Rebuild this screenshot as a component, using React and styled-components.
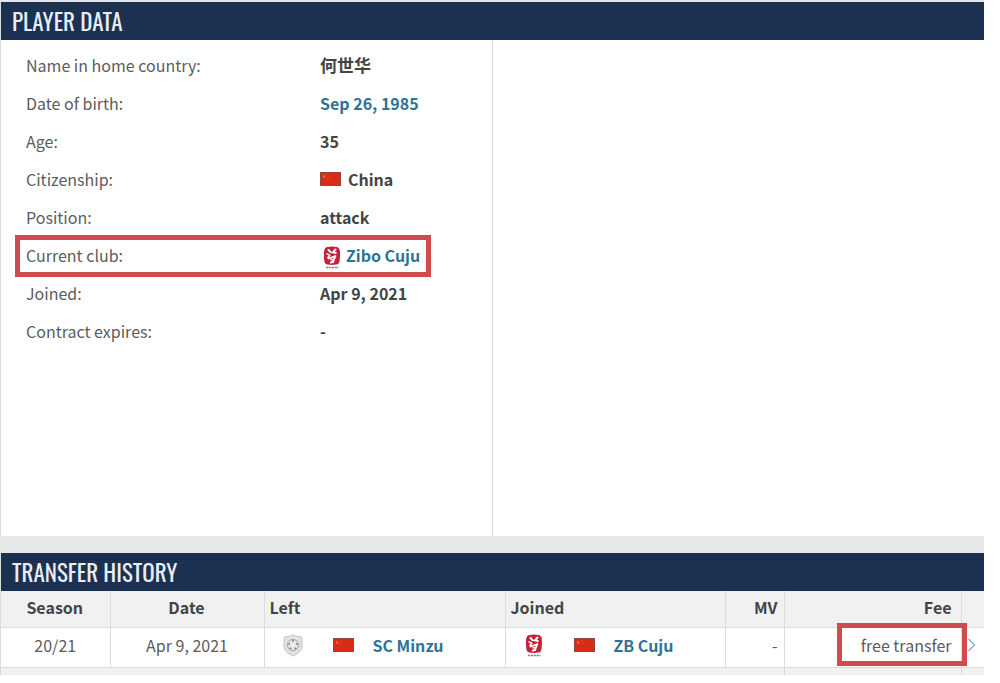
import React from "react";
import styled, { createGlobalStyle, css } from "styled-components";

const colors = {
  navy: "#1c3151",
  link: "#2f7396",
  text: "#444446",
  muted: "#5c5c5e",
  line: "#dcdcde",
  grey: "#f1f1f2",
  mark: "#d14a4e",
};

const GlobalStyle = createGlobalStyle`
  *, *::after {
    box-sizing: border-box;
  }
  body {
    margin: 0;
    background: #fff;
    color: ${colors.text};
    font-family: "Noto Sans CJK SC", "Noto Sans", sans-serif;
    font-size: 16px;
    line-height: 24px;
  }
`;

const Page = styled.main`
  margin-right: 16px;
  padding-top: 2px;
  background: #e6e7e8;
`;

const Box = styled.section`
  margin-bottom: ${props => (props.$last ? "0" : "17px")};
  border-left: 1px solid ${colors.line};
  background: #fff;
`;

const Title = styled.h2`
  height: 38px;
  margin: 0;
  padding: 0 11px;
  background: ${colors.navy};
  color: #e9eef4;
  font-family: Oswald, "Liberation Sans Narrow", sans-serif;
  font-size: 23px;
  font-weight: 450;
  line-height: 38px;
`;

const Columns = styled.div`
  display: grid;
  grid-template-columns: 1fr 1fr;
  min-height: 496px;
`;

const DataList = styled.dl`
  margin: 0;
  padding: 6px 0 0 14px;
  border-right: 1px solid ${colors.line};
`;

const marked = css`
  position: relative;
  &::after {
    content: "";
    position: absolute;
    border: 5px solid ${colors.mark};
    pointer-events: none;
    ${props => props.$mark}
  }
`;

const DataRow = styled.div`
  display: grid;
  grid-template-columns: 294px 1fr;
  align-items: center;
  width: 416px;
  height: 38px;
  padding-left: 11px;
  ${props => props.$mark && marked}
`;

const Label = styled.dt`
  color: ${colors.muted};
`;

const Value = styled.dd`
  display: flex;
  align-items: center;
  gap: ${props => (props.$badge ? "5px" : "7px")};
  margin: 0;
  padding-left: ${props => (props.$badge ? "3px" : "0")};
  font-size: ${props => (props.$native ? "17px" : "16px")};
  font-weight: 700;
  svg {
    margin-top: ${props => (props.$badge ? "5px" : "0")};
  }
`;

const Anchor = styled.a`
  color: ${colors.link};
  font-weight: 700;
  text-decoration: none;
`;

const Table = styled.table`
  width: 100%;
  border-collapse: collapse;
  table-layout: fixed;
`;

const Col = styled.col`
  width: ${props => props.$width || "auto"};
`;

const cell = css`
  padding: 0 ${props => (props.$wide ? "9px" : "6px")} 4px;
  border-right: 1px solid ${colors.line};
  border-bottom: 1px solid ${colors.line};
  text-align: ${props => props.$align || "left"};
  &:last-child {
    border-right: 0;
  }
`;

const Th = styled.th`
  ${cell}
  height: 36px;
  padding-left: 5px;
  background: ${colors.grey};
`;

const Td = styled.td`
  ${cell}
  height: 40px;
  padding-left: 6px;
  color: ${colors.muted};
  ${props => props.$mark && marked}
`;

const FootCell = styled.td`
  height: 8px;
  padding: 0;
  background: ${colors.grey};
  border-right: ${props => (props.$last ? "0" : "1px solid " + colors.line)};
`;

const Club = styled.div`
  display: grid;
  grid-template-columns: 44px 22px 1fr;
  align-items: center;
  justify-items: center;
  column-gap: 18px;
  a {
    justify-self: start;
  }
`;

const More = styled.a`
  display: flex;
  margin: 0 -4px;
  padding-left: 3px;
`;

function Flag() {
  return (
    <svg width="21" height="14" viewBox="0 0 21 14" role="img" aria-label="China">
      <rect x="0.5" y="0.5" width="20" height="13" fill="#d92b18" stroke="#8d4a3c" />
      <path d="M4 2.4l.6 1.3 1.4.1-1.1.9.4 1.4L4 5.4l-1.3.7.4-1.4L2 3.8l1.4-.1z" fill="#ea6a35" />
      <path d="M7 2h1v1H7zM8 4h1v1H8zM7 6h1v1H7z" fill="#e2502a" />
    </svg>
  );
}

function CujuBadge() {
  return (
    <svg width="18" height="23" viewBox="0 0 18 23" role="img" aria-label="Zibo Cuju">
      <path d="M4 .9Q9 0 14 .9q2.500.8 2.800 3.500.6 6-.3 11-.5 2.700-3 3.100-4.500.8-9 0-2.600-.4-3.100-3Q.5 10 1.200 4.500 1.500 1.800 4 .9z" fill="#c3223a" />
      <g fill="none" stroke="#fff" strokeLinecap="round" strokeLinejoin="round">
        <path d="M5.500 4l2.300 2.300M12.500 3.500L9.800 6.300l3 .7" strokeWidth="1.900" />
        <path d="M4 7.800l2.700 1.400L5 11.500" strokeWidth="1.500" />
        <path d="M5.500 12.500l7-2.500-1.500 3.300-2.800.4M10.800 13.500l-.6 2.500-2.400.5" strokeWidth="1.800" />
      </g>
      <path d="M3 21.500h12.500" stroke="#8d8785" strokeWidth="1.400" strokeDasharray="2.500 .5" />
    </svg>
  );
}

function MinzuBadge() {
  return (
    <svg width="20" height="23" viewBox="0 0 20 23" role="img" aria-label="SC Minzu">
      <path d="M10 .8q3.500 2.400 8 1.700l1 1.500v9q-.5 5-9 9-8.500-4-9-9V4l1-1.500Q6.500 3.200 10 .8z" fill="#e2e2e3" stroke="#c4c5c7" />
      <circle cx="10" cy="11" r="5.500" fill="#ececed" stroke="#9d9ea0" strokeWidth="1" />
      <path d="M10 9l2 1.500-.8 2.300H8.800L8 10.500z" fill="#fff" stroke="#c0c1c3" strokeWidth=".6" />
      <path d="M10 6v1.700M5.300 9.600l1.600.6M14.700 9.600l-1.600.6M7 15l1-1.300M13 15l-1-1.300" stroke="#77787a" strokeWidth="1.500" />
    </svg>
  );
}

const Chevron = () => (
  <svg width="9" height="14" viewBox="0 0 9 14" fill="none" stroke="#7db4cc" strokeWidth="1.400" aria-hidden="true">
    <path d="M1.500 1l6 6-6 6" />
  </svg>
);

function PlayerData() {
  return (
    <Box>
      <Title>PLAYER DATA</Title>
      <Columns>
        <DataList>
          <DataRow>
            <Label>Name in home country:</Label>
            <Value $native lang="zh-CN">何世华</Value>
          </DataRow>
          <DataRow>
            <Label>Date of birth:</Label>
            <Value><Anchor href="#birthday">Sep 26, 1985</Anchor></Value>
          </DataRow>
          <DataRow>
            <Label>Age:</Label>
            <Value>35</Value>
          </DataRow>
          <DataRow>
            <Label>Citizenship:</Label>
            <Value><Flag />China</Value>
          </DataRow>
          <DataRow>
            <Label>Position:</Label>
            <Value>attack</Value>
          </DataRow>
          <DataRow $mark="inset: -1px 0 -3px 0;">
            <Label>Current club:</Label>
            <Value $badge><CujuBadge /><Anchor href="#zibo-cuju">Zibo Cuju</Anchor></Value>
          </DataRow>
          <DataRow>
            <Label>Joined:</Label>
            <Value>Apr 9, 2021</Value>
          </DataRow>
          <DataRow>
            <Label>Contract expires:</Label>
            <Value>-</Value>
          </DataRow>
        </DataList>
      </Columns>
    </Box>
  );
}

function TransferHistory() {
  return (
    <Box $last>
      <Title>TRANSFER HISTORY</Title>
      <Table>
        <colgroup>
          <Col $width="109px" />
          <Col $width="154px" />
          <Col $width="241px" />
          <Col $width="220px" />
          <Col $width="59px" />
          <Col />
          <Col $width="23px" />
        </colgroup>
        <thead>
          <tr>
            <Th $align="center">Season</Th>
            <Th $align="center">Date</Th>
            <Th>Left</Th>
            <Th>Joined</Th>
            <Th $align="right">MV</Th>
            <Th $align="right" $wide>Fee</Th>
            <Th />
          </tr>
        </thead>
        <tbody>
          <tr>
            <Td $align="center">20/21</Td>
            <Td $align="center">Apr 9, 2021</Td>
            <Td>
              <Club><MinzuBadge /><Flag /><Anchor href="#sc-minzu">SC Minzu</Anchor></Club>
            </Td>
            <Td>
              <Club><CujuBadge /><Flag /><Anchor href="#zb-cuju">ZB Cuju</Anchor></Club>
            </Td>
            <Td $align="right">-</Td>
            <Td $align="right" $wide $mark="top: -5px; right: -6px; width: 130px; height: 43px;">free transfer</Td>
            <Td><More href="#details" aria-label="Transfer details"><Chevron /></More></Td>
          </tr>
        </tbody>
        <tfoot>
          <tr>
            <FootCell colSpan="5" />
            <FootCell />
            <FootCell $last />
          </tr>
        </tfoot>
      </Table>
    </Box>
  );
}

function App() {
  return (
    <>
      <GlobalStyle />
      <Page>
        <PlayerData />
        <TransferHistory />
      </Page>
    </>
  );
}

export default App;
